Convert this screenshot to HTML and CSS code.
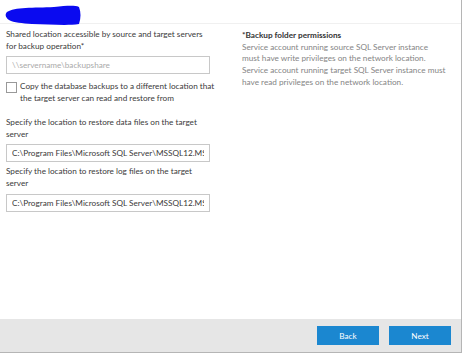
FILE: index.html
```html
<!DOCTYPE html>
<html lang="en">
  <head>
    <meta charset="UTF-8" />
    <meta name="viewport" content="width=device-width, initial-scale=1.0" />
    <title>Backup location</title>
    <link rel="stylesheet" href="styles.css">
  </head>
  <body>
    <div class="window">
      <div class="header">
        <svg class="scribble" width="78" height="22" viewBox="0 0 78 22">
          <path d="M3 8 C10 3 30 4 50 3 C62 2 70 1 75 3 C77 8 77 14 75 20 C62 22 44 20 28 20 C18 19 10 19 5 16 C1 13 1 10 3 8 Z" fill="#0a0af0" />
        </svg>
      </div>
      <div class="content">
        <form class="left">
          <label class="field-label" for="share">Shared location accessible by source and target servers for backup operation*</label>
          <input type="text" id="share" class="text-input share" placeholder="\\servername\backupshare" />

          <label class="check-row">
            <input type="checkbox" class="check" />
            <span>Copy the database backups to a different location that the target server can read and restore from</span>
          </label>

          <label class="field-label" for="datapath">Specify the location to restore data files on the target server</label>
          <input type="text" id="datapath" class="text-input" value="C:\Program Files\Microsoft SQL Server\MSSQL12.MSSQLSERVER\MSSQL\DATA" />

          <label class="field-label" for="logpath">Specify the location to restore log files on the target server</label>
          <input type="text" id="logpath" class="text-input" value="C:\Program Files\Microsoft SQL Server\MSSQL12.MSSQLSERVER\MSSQL\DATA" />
        </form>
        <div class="right">
          <div class="note-title">*Backup folder permissions</div>
          <p class="note">Service account running source SQL Server instance<br>must have write privileges on the network location.<br>Service account running target SQL Server instance must<br>have read privileges on the network location.</p>
        </div>
      </div>
      <div class="footer">
        <button type="button" class="btn">Back</button>
        <button type="button" class="btn">Next</button>
      </div>
    </div>
  </body>
</html>
```

FILE: styles.css
```css
body {
  margin: 0;
  font-family: Lato, "Open Sans", sans-serif;
  font-size: 8.2px;
  color: #3a3a3a;
  background: #fff;
}
.window {
  width: 461px;
  height: 352px;
  border-right: 1px solid #b5b5b5;
  border-bottom: 1px solid #b5b5b5;
  display: flex;
  flex-direction: column;
}
.header {
  height: 24px;
  border-bottom: 1px solid #f0f0f0;
  padding: 4px 0 0 4px;
  box-sizing: border-box;
}
.scribble {
  display: block;
}
.content {
  flex: 1;
  display: flex;
  padding: 5px 0 0 6px;
}
.left {
  width: 204px;
  margin: 0;
}
.right {
  margin-left: 32px;
  padding-top: 1px;
  width: 218px;
  white-space: nowrap;
}
.field-label {
  display: block;
  line-height: 11.7px;
  margin-bottom: 4px;
}
.text-input {
  display: block;
  box-sizing: border-box;
  width: 204px;
  height: 18px;
  border: 1px solid #c8c8c8;
  padding: 0 5px;
  font-family: inherit;
  font-size: 8.2px;
  color: #3a3a3a;
  margin: 0 0 4px;
}
.text-input.share {
  margin-bottom: 7px;
}
.text-input::placeholder {
  color: #aaa;
}
.check-row {
  display: flex;
  align-items: flex-start;
  width: 214px;
  line-height: 11.7px;
  margin-bottom: 12px;
}
.check {
  appearance: none;
  width: 11px;
  height: 11px;
  border: 1px solid #999;
  margin: 1px 3px 0 0;
  flex-shrink: 0;
  background: #fff;
}
.note-title {
  font-weight: 700;
  color: #333;
  line-height: 11.7px;
}
.note {
  margin: 0;
  color: #858585;
  line-height: 11.7px;
}
.footer {
  height: 33px;
  background: #e6e6e6;
  display: flex;
  justify-content: flex-end;
  align-items: center;
  gap: 10px;
  padding-right: 10px;
}
.btn {
  width: 62px;
  height: 19px;
  background: #1b87d0;
  border: 0;
  color: #fff;
  font-family: inherit;
  font-size: 8.2px;
  padding: 0;
}
```
